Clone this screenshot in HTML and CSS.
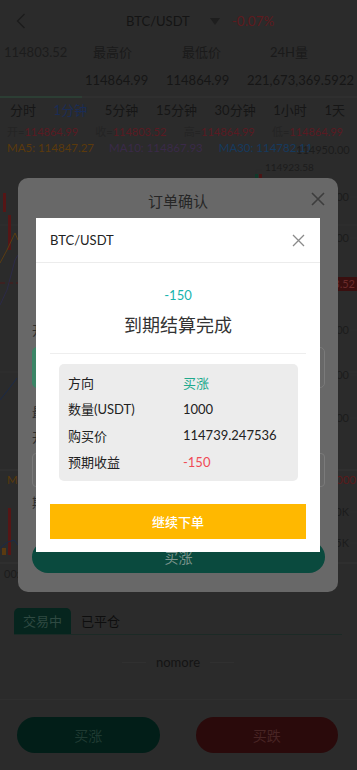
FILE: index.html
```html
<!DOCTYPE html>
<html lang="zh-CN">
<head>
<meta charset="utf-8">
<title>BTC/USDT</title>
<link rel="stylesheet" href="styles.css">
</head>
<body>
<div class="page">
  <header class="topbar">
    <svg class="back" width="10" height="16" viewBox="0 0 10 16"><path d="M8.5 1 L1.5 8 L8.5 15" fill="none" stroke="#1c1c1c" stroke-width="1.4"/></svg>
    <div class="pair">
      <span class="pair-name">BTC/USDT</span>
      <span class="caret"></span>
      <span class="change">-0.07%</span>
    </div>
  </header>

  <section class="stats">
    <div class="stat-price">114803.52</div>
    <div class="stat-label l1">最高价</div>
    <div class="stat-label l2">最低价</div>
    <div class="stat-label l3">24H量</div>
    <div></div>
    <div class="stat-val">114864.99</div>
    <div class="stat-val">114864.99</div>
    <div class="stat-val">221,673,369.5922</div>
  </section>
  <div class="divider"><span class="divider-accent"></span></div>

  <nav class="periods">
    <span>分时</span>
    <span class="active">1分钟</span>
    <span>5分钟</span>
    <span>15分钟</span>
    <span>30分钟</span>
    <span>1小时</span>
    <span>1天</span>
  </nav>

  <div class="ohlc">
    <span>开=<b>114864.99</b></span>
    <span>收=<b>114803.52</b></span>
    <span>高=<b>114864.99</b></span>
    <span>低=<b>114864.99</b></span>
  </div>
  <div class="ma">
    <span class="ma5">MA5: 114847.27</span>
    <span class="ma10">MA10: 114867.93</span>
    <span class="ma30">MA30: 114782.11</span>
    <span class="axis-top">114950.00</span>
  </div>

  <svg class="chart" width="357" height="434" viewBox="0 0 357 434">
    <g class="grid" stroke="#303030" stroke-width="1">
      <line x1="0" y1="69" x2="357" y2="69"/>
      <line x1="0" y1="216" x2="357" y2="216"/>
      <line x1="0" y1="314" x2="357" y2="314" stroke="#353535"/>
      <line x1="0" y1="407" x2="357" y2="407" stroke="#353535"/>
    </g>
    <rect x="3" y="37" width="3" height="19" fill="#561616"/>
    <rect x="8" y="59" width="3" height="35" fill="#561616"/>
    <polyline points="0,107 7,94 15,77 18,84" fill="none" stroke="#5a3d12" stroke-width="1"/>
    <line x1="0" y1="127" x2="357" y2="127" stroke="#4e1818" stroke-dasharray="5 3"/>
    <polyline points="0,149 7,134 15,104 18,99" fill="none" stroke="#2c2a48" stroke-width="1"/>
    <polyline points="0,244 8,234 17,222" fill="none" stroke="#1b2a48" stroke-width="1"/>
    <path d="M256 14 h6 M256 14 v4" stroke="#2a2a2a" stroke-width="1"/>
    <rect x="255" y="18" width="3" height="4" fill="#0f3a2a"/>
    <rect x="259" y="18" width="3" height="4" fill="#4a1414"/>
    <text x="265" y="15" class="ax small">114923.58</text>
    <g class="ax">
      <text x="349" y="45" text-anchor="end">114900.00</text>
      <text x="349" y="86" text-anchor="end">114880.00</text>
      <text x="349" y="178" text-anchor="end">114800.00</text>
      <text x="349" y="223" text-anchor="end">114780.00</text>
      <text x="349" y="266" text-anchor="end">114760.00</text>
      <text x="349" y="360" text-anchor="end">10K</text>
      <text x="349" y="391" text-anchor="end">5K</text>
    </g>
    <g stroke="#2f2f2f">
      <line x1="350" y1="41" x2="357" y2="41"/>
      <line x1="350" y1="82" x2="357" y2="82"/>
      <line x1="350" y1="174" x2="357" y2="174"/>
      <line x1="350" y1="219" x2="357" y2="219"/>
      <line x1="350" y1="262" x2="357" y2="262"/>
      <line x1="350" y1="356" x2="357" y2="356"/>
      <line x1="350" y1="387" x2="357" y2="387"/>
    </g>
    <rect x="298" y="121" width="59" height="14" fill="#3a0f0f"/>
    <text x="355" y="132" text-anchor="end" class="tag">114803.52</text>
    <text x="7" y="328" class="vol-ma">MA5: 1452.35</text>
    <text x="356" y="328" text-anchor="end" class="vol-red">VOL: 2000</text>
    <rect x="8" y="352" width="3" height="47" fill="#561616"/>
    <rect x="2" y="392" width="4" height="7" fill="#5a3a10"/>
    <polyline points="0,392 8,386 14,384 18,389" fill="none" stroke="#1b2a48" stroke-width="1"/>
    <text x="4" y="422" class="ax">00:00</text>
  </svg>

  <section class="orders">
    <div class="order-tabs">
      <span class="otab active">交易中</span>
      <span class="otab">已平仓</span>
    </div>
    <div class="nomore"><span class="rule"></span><span>nomore</span><span class="rule"></span></div>
  </section>

  <footer class="actions">
    <button class="act act-up">买涨</button>
    <button class="act act-down">买跌</button>
  </footer>
</div>

<div class="confirm">
  <div class="confirm-head">
    <span class="confirm-title">订单确认</span>
    <svg class="confirm-close" width="14" height="14" viewBox="0 0 14 14"><path d="M1 1 L13 13 M13 1 L1 13" stroke="#3d3d3d" stroke-width="1.6"/></svg>
  </div>
  <div class="confirm-body">
    <div class="c-label first">开仓</div>
    <div class="c-options">
      <div class="c-opt on"></div>
      <div class="c-opt"></div>
    </div>
    <div class="c-label gap16">最低</div>
    <div class="c-label gap9">开仓</div>
    <div class="c-input"></div>
    <div class="c-label gap7">期望</div>
    <button class="c-btn">买涨</button>
  </div>
</div>

<div class="result">
  <div class="result-head">
    <span class="result-pair">BTC/USDT</span>
    <svg class="result-close" width="13" height="13" viewBox="0 0 13 13"><path d="M1 1 L12 12 M12 1 L1 12" stroke="#8a8a8a" stroke-width="1.3"/></svg>
  </div>
  <div class="result-amount">-150</div>
  <div class="result-title">到期结算完成</div>
  <div class="result-rule"></div>
  <div class="result-box">
    <div class="r-row"><span class="r-k">方向</span><span class="r-v up">买涨</span></div>
    <div class="r-row"><span class="r-k">数量(USDT)</span><span class="r-v">1000</span></div>
    <div class="r-row"><span class="r-k">购买价</span><span class="r-v">114739.247536</span></div>
    <div class="r-row"><span class="r-k">预期收益</span><span class="r-v loss">-150</span></div>
  </div>
  <button class="result-btn">继续下单</button>
</div>
</body>
</html>
```

FILE: styles.css
```css
* { box-sizing: border-box; }
html, body { margin: 0; padding: 0; }
body {
  width: 357px;
  height: 770px;
  overflow: hidden;
  background: #2b2b2b;
  font-family: "Lato", "Noto Sans CJK SC", sans-serif;
  color: #161616;
}
.page { width: 357px; }

.topbar {
  height: 42px;
  display: flex;
  align-items: center;
  padding-left: 16px;
}
.back { display: block; }
.pair {
  margin-left: 100px;
  display: flex;
  align-items: center;
  font-size: 13px;
}
.pair-name { color: #141414; }
.caret {
  width: 0; height: 0;
  margin-left: 20px;
  border-left: 5px solid transparent;
  border-right: 5px solid transparent;
  border-top: 7px solid #1e1e1e;
}
.change { margin-left: 12px; color: #5e1a1e; font-size: 13.5px; }

.stats {
  display: grid;
  grid-template-columns: 85px 81px 81px 1fr;
  grid-template-rows: 20px 20px;
  row-gap: 8px;
  font-size: 13px;
  line-height: 20px;
}
.stat-price { padding-left: 4px; color: #1c1c1c; }
.stat-label { color: #1a1a1a; }
.l1 { padding-left: 8px; }
.l2 { padding-left: 16px; }
.l3 { padding-left: 23px; }
.stat-val { color: #161616; white-space: nowrap; }

.divider {
  margin-top: 6px;
  height: 2px;
  background: #2f2f2f;
}
.divider-accent { display: block; width: 82px; height: 2px; background: #2c3e34; }

.periods {
  height: 24px;
  line-height: 24px;
  display: flex;
  justify-content: space-between;
  padding: 0 12px 0 10px;
  font-size: 13px;
  color: #161616;
}
.periods .active { color: #1a2c55; }

.ohlc {
  margin-top: 2px;
  height: 16px;
  line-height: 16px;
  display: flex;
  justify-content: space-between;
  padding: 0 14px 0 7px;
  font-size: 11px;
  color: #242424;
}
.ohlc b { font-weight: normal; color: #5a1a22; }

.ma {
  position: relative;
  height: 16px;
  line-height: 16px;
  display: flex;
  padding-left: 7px;
  font-size: 11.5px;
  white-space: nowrap;
}
.ma5 { color: #5b3a0c; }
.ma10 { color: #3a2a48; margin-left: 15px; }
.ma30 { color: #163a5e; margin-left: 16px; }
.axis-top {
  position: absolute;
  left: 296px;
  top: 2px;
  font-size: 11px;
  color: #1c1c1c;
}

.chart { display: block; }
.chart .ax { font-size: 11px; fill: #1c1c1c; font-family: "Lato", sans-serif; }
.chart .small { font-size: 10px; }
.chart .tag { font-size: 11px; fill: #6a2b2b; font-family: "Lato", sans-serif; }
.chart .vol-ma { font-size: 11.5px; fill: #5a3a0a; font-family: "Lato", sans-serif; }
.chart .vol-red { font-size: 11.5px; fill: #5a1a1a; font-family: "Lato", sans-serif; }

.orders { padding: 18px 15px 0 14px; }
.order-tabs {
  display: flex;
  align-items: flex-end;
  border-bottom: 1px solid #1c2a26;
  height: 27px;
}
.otab {
  height: 26px;
  line-height: 26px;
  font-size: 13px;
  color: #0e0e0e;
  padding: 0 10px;
}
.otab.active {
  background: #06251e;
  color: #2f4a42;
  border-radius: 5px 5px 0 0;
  padding: 0 9px;
}
.nomore {
  margin-top: 18px;
  height: 18px;
  line-height: 18px;
  display: flex;
  justify-content: center;
  align-items: center;
  gap: 10px;
  font-size: 13px;
  color: #141414;
}
.nomore .rule { width: 24px; height: 1px; background: #303030; }

.actions {
  margin-top: 28px;
  border-top: 1px solid #2f2f2f;
  padding: 17px 19px 0 17px;
  display: grid;
  grid-template-columns: 1fr 1fr;
  column-gap: 36px;
}
.act {
  height: 36px;
  border: none;
  border-radius: 18px;
  font-family: "Noto Sans CJK SC", sans-serif;
  font-size: 14px;
}
.act-up { background: #021e18; color: #1f3a32; }
.act-down { background: #2a0a0b; color: #482424; }

/* order confirmation sheet (behind the result popup) */
.confirm {
  position: fixed;
  top: 178px;
  left: 18px;
  width: 320px;
  height: 414px;
  background: #686868;
  border-radius: 10px;
}
.confirm-head {
  position: relative;
  height: 44px;
  display: flex;
  align-items: center;
  justify-content: center;
}
.confirm-title { font-size: 15px; color: #262626; }
.confirm-close { position: absolute; right: 13px; top: 14px; }
.confirm-body {
  display: flex;
  flex-direction: column;
  padding: 0 13px 0 14px;
}
.c-label { font-size: 13px; line-height: 16px; color: #2e2e2e; }
.c-label.first { margin-top: 100px; }
.c-label.gap16 { margin-top: 16px; }
.c-label.gap9 { margin-top: 9px; }
.c-label.gap7 { margin-top: 7px; }
.c-options {
  margin-top: 9px;
  height: 41px;
  display: grid;
  grid-template-columns: 1fr 1fr;
  column-gap: 10px;
}
.c-opt { border: 1px solid #7a7a7a; border-radius: 5px; }
.c-opt.on { background: #3b8566; border-color: #3b8566; }
.c-input {
  margin-top: 8px;
  height: 34px;
  border: 1px solid #7a7a7a;
  border-radius: 4px;
}
.c-btn {
  margin-top: 31px;
  height: 32px;
  border: none;
  border-radius: 16px;
  background: #0a4a3e;
  color: #7a948c;
  font-family: "Noto Sans CJK SC", sans-serif;
  font-size: 14px;
}

/* result popup */
.result {
  position: fixed;
  top: 218px;
  left: 36px;
  width: 284px;
  height: 334px;
  background: #ffffff;
  display: flex;
  flex-direction: column;
}
.result-head {
  height: 45px;
  padding: 0 15px 0 14px;
  display: flex;
  align-items: center;
  justify-content: space-between;
  border-bottom: 1px solid #ececec;
}
.result-pair { font-size: 13px; color: #222; }
.result-amount {
  margin-top: 23px;
  text-align: center;
  font-size: 13px;
  line-height: 18px;
  color: #17b3ad;
}
.result-title {
  margin-top: 8px;
  text-align: center;
  font-size: 18px;
  line-height: 26px;
  color: #333;
}
.result-rule {
  margin: 15px 14px 0;
  height: 1px;
  background: #eeeeee;
}
.result-box {
  margin: 10px 22px 0 23px;
  padding: 5px 9px 6px;
  background: #ececec;
  border-radius: 5px;
}
.r-row {
  display: flex;
  height: 26.5px;
  align-items: center;
  font-size: 13px;
  color: #222;
}
.r-k { width: 115px; }
.r-v.up { color: #20a98c; }
.r-v.loss { color: #f04a55; }
.result-btn {
  margin: 23px 14px 0;
  height: 35px;
  border: none;
  background: #ffb800;
  color: #ffffff;
  font-family: "Noto Sans CJK SC", sans-serif;
  font-size: 13px;
  font-weight: 500;
}
```
